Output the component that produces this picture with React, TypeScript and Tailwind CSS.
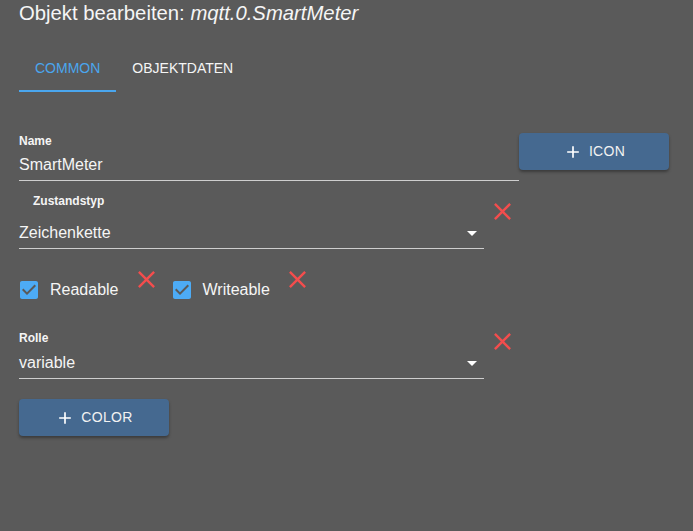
import React from "react";

const FONT = { fontFamily: '"Liberation Sans", Arial, sans-serif' };

function CloseIcon({ className = "" }: { className?: string }) {
  return (
    <svg viewBox="0 0 24 24" className={`w-[29px] h-[29px] shrink-0 ${className}`}>
      <path
        fill="#f44d4d"
        d="M19 6.41L17.59 5 12 10.59 6.41 5 5 6.41 10.59 12 5 17.59 6.41 19 12 13.41 17.59 19 19 17.59 13.41 12z"
      />
    </svg>
  );
}

function ArrowDrop({ className = "" }: { className?: string }) {
  return (
    <svg viewBox="0 0 24 24" className={`absolute right-0 w-6 h-6 ${className}`}>
      <path fill="#ffffff" d="M7 10l5 5 5-5z" />
    </svg>
  );
}

function PlusIcon() {
  return (
    <svg viewBox="0 0 24 24" className="w-5 h-5 mr-[6px]">
      <path fill="#ffffff" d="M19 13h-6v6h-2v-6H5v-2h6V5h2v6h6v2z" />
    </svg>
  );
}

function CheckIcon() {
  return (
    <div className="w-[42px] h-[42px] flex items-center justify-center shrink-0">
      <svg viewBox="0 0 24 24" className="w-6 h-6">
        <path
          fill="#4dabf5"
          d="M19 3H5c-1.11 0-2 .9-2 2v14c0 1.1.89 2 2 2h14c1.11 0 2-.9 2-2V5c0-1.1-.89-2-2-2zm-9 14l-5-5 1.41-1.41L10 14.17l7.59-7.59L19 8l-9 9z"
        />
      </svg>
    </div>
  );
}

function AddButton({ label }: { label: string }) {
  return (
    <button className="w-[150px] h-[37px] rounded-[4px] bg-[#456990] shadow-[0_2px_3px_rgba(0,0,0,0.35)] flex items-center justify-center text-[14px] text-[#f2f2f2] uppercase tracking-[0.3px]">
      <PlusIcon />
      {label}
    </button>
  );
}

export default function App() {
  return (
    <div style={FONT} className="w-[693px] h-[531px] bg-[#5a5a5a] text-[#f5f5f5] overflow-hidden">
      {/* title */}
      <div className="pl-[19px] text-[20.3px] leading-[26px]">
        Objekt bearbeiten: <i>mqtt.0.SmartMeter</i>
      </div>

      {/* tabs */}
      <div className="mt-[18px] ml-[19px] flex h-12 text-[14px] uppercase">
        <div className="relative px-4 flex items-center text-[#4aa6ee]">
          COMMON
          <div className="absolute left-0 right-0 bottom-0 h-[2px] bg-[#4aa6ee]" />
        </div>
        <div className="px-4 flex items-center text-[#f5f5f5]">OBJEKTDATEN</div>
      </div>

      <div className="pl-[19px] mt-[41px]">
        {/* name + icon */}
        <div className="flex items-start">
          <div className="w-[500px]">
            <div className="mt-[1px] text-[12px] leading-[14px] font-bold">Name</div>
            <div className="pt-[7px] pb-[5px] text-[16px] leading-[20px] border-b border-[#cecece]">
              SmartMeter
            </div>
          </div>
          <AddButton label="Icon" />
        </div>

        {/* Zustandstyp */}
        <div className="flex items-start">
          <div className="relative w-[465px] mt-[13px]">
            <div className="pl-[14px] text-[12px] leading-[14px] font-bold">Zustandstyp</div>
            <div className="pt-[15px] pb-[5px] text-[16px] leading-[20px] border-b border-[#cecece]">
              Zeichenkette
            </div>
            <ArrowDrop className="top-[27px]" />
          </div>
          <CloseIcon className="ml-[4px] mt-[16px]" />
        </div>

        {/* checkboxes */}
        <div className="flex items-start -ml-[11px] mt-[20px] text-[16px]">
          <div className="flex items-center h-[42px]">
            <CheckIcon />
            <span className="leading-[20px]">Readable</span>
          </div>
          <CloseIcon className="ml-[13px] -mt-[4px]" />
          <div className="flex items-center h-[42px]">
            <CheckIcon />
            <span className="leading-[20px]">Writeable</span>
          </div>
          <CloseIcon className="ml-[13px] -mt-[4px]" />
        </div>

        {/* Rolle */}
        <div className="flex items-start mt-[16px]">
          <div className="relative w-[465px] mt-[4px]">
            <div className="text-[12px] leading-[14px] font-bold">Rolle</div>
            <div className="pt-[8px] pb-[5px] text-[16px] leading-[20px] border-b border-[#cecece]">
              variable
            </div>
            <ArrowDrop className="top-[20px]" />
          </div>
          <CloseIcon className="ml-[4px]" />
        </div>

        <div className="mt-[20px]">
          <AddButton label="Color" />
        </div>
      </div>
    </div>
  );
}
